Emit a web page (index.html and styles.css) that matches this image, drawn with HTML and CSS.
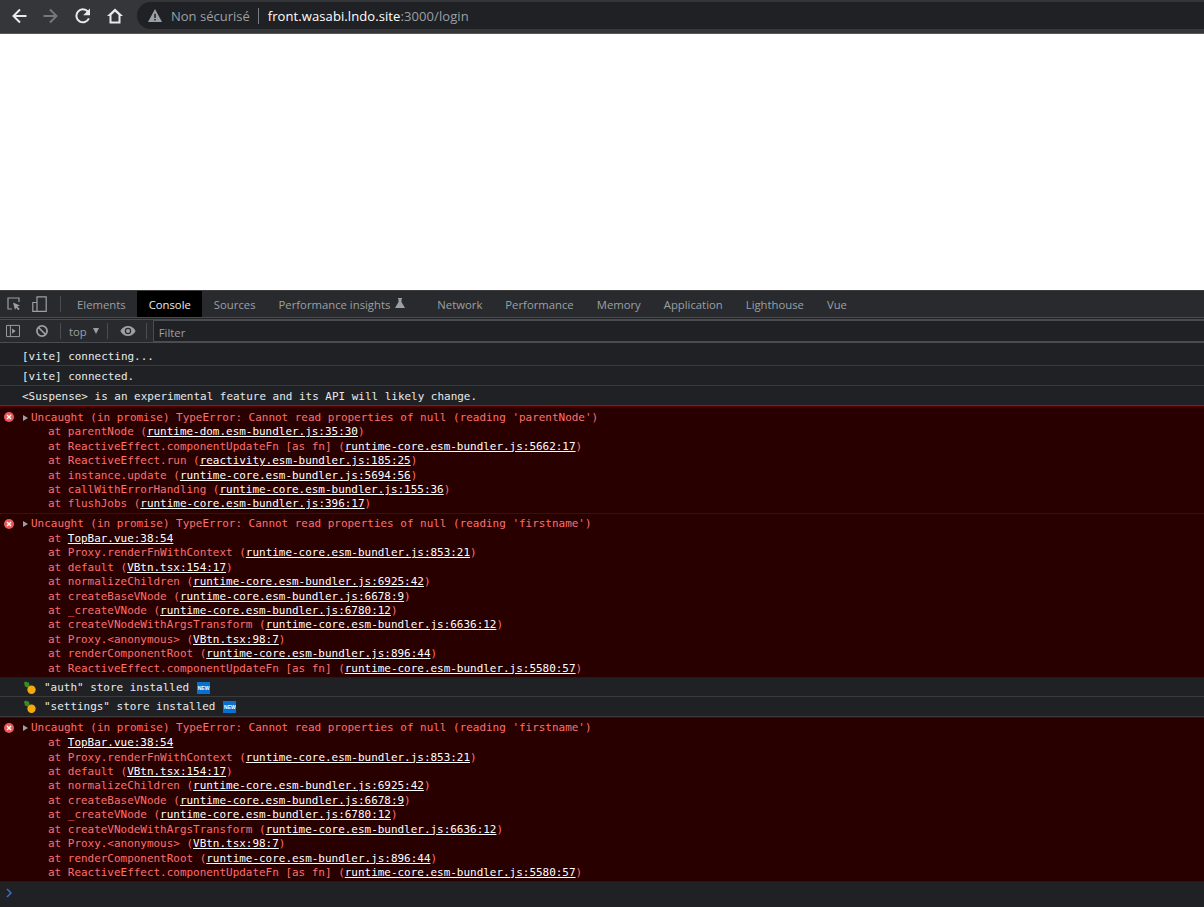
FILE: index.html
```html
<!DOCTYPE html>
<html lang="fr">
<head>
<meta charset="utf-8">
<title>front.wasabi.lndo.site:3000/login</title>
<link rel="stylesheet" href="styles.css">
</head>
<body>
<header class="browser-bar">
  <nav class="browser-nav">
    <svg class="nav-icon" viewBox="0 0 16 16"><path d="M15.500 8H2.500M9 1.500 2.500 8 9 14.500" fill="none" stroke="#e8eaed" stroke-width="2"/></svg>
    <svg class="nav-icon" viewBox="0 0 16 16"><path d="M.5 8h13M7 1.500 13.500 8 7 14.500" fill="none" stroke="#75787c" stroke-width="2"/></svg>
    <svg class="nav-icon" viewBox="0 0 16 16"><path d="M13.900 10.400A6.500 6.500 0 1 1 12.800 3.500" fill="none" stroke="#e8eaed" stroke-width="2"/><path d="M15 .5v6.800H8.200z" fill="#e8eaed"/></svg>
    <svg class="nav-icon" viewBox="0 0 16 16"><path d="M8 .5 0 8h2.500v7.500h11V8H16zM4.500 13.500V7L8 3.700 11.500 7v6.500z" fill="#e8eaed" fill-rule="evenodd"/></svg>
  </nav>
  <div class="omnibox">
    <svg class="warn-icon" viewBox="0 0 16 16"><path d="M8 1 .5 15h15zM7.200 6h1.600v4.600H7.200zM7.200 11.600h1.600v1.600H7.200z" fill="#9aa0a6" fill-rule="evenodd"/></svg>
    <span class="not-secure">Non sécurisé</span>
    <span class="omni-sep"></span>
    <span class="url"><b>front.wasabi.lndo.site</b>:3000/login</span>
  </div>
</header>

<main class="page"></main>

<section class="devtools">
  <div class="tabbar">
    <svg class="tool-icon inspect" viewBox="0 0 16 16"><path d="M6 13H2V2h11v4" fill="none" stroke="#9aa0a6" stroke-width="1.200"/><path d="m7 6.500 7 3-2.700 1 2.400 2.600-1.300 1.200-2.300-2.600L9 14z" fill="#9aa0a6"/></svg>
    <svg class="tool-icon device" viewBox="0 0 16 16"><path d="M5 15.400H.8V6.500H5M5 15.400h9.200V.8H5v14.600z" fill="none" stroke="#9aa0a6" stroke-width="1.200"/></svg>
    <span class="vsep tab-sep"></span>
    <span class="tab">Elements</span>
    <span class="tab active">Console</span>
    <span class="tab">Sources</span>
    <span class="tab">Performance insights<svg class="flask" viewBox="0 0 10 10"><path d="M3 0h4v1H6.500v3L10 10H0l3.500-6V1H3z" fill="#9aa0a6"/></svg></span>
    <span class="tab">Network</span>
    <span class="tab">Performance</span>
    <span class="tab">Memory</span>
    <span class="tab">Application</span>
    <span class="tab">Lighthouse</span>
    <span class="tab">Vue</span>
  </div>
  <div class="filterbar">
    <svg class="bar-icon sidebar" viewBox="0 0 16 16"><path d="M.6 1.600h14.800v12.800H.6zM5 1.600v12.800" fill="none" stroke="#9aa0a6" stroke-width="1.100"/><path d="m7 5 4 3-4 3z" fill="#9aa0a6"/></svg>
    <svg class="bar-icon clear" viewBox="0 0 16 16"><circle cx="8" cy="8" r="5.800" fill="none" stroke="#9aa0a6" stroke-width="2"/><path d="m4 4 8 8" stroke="#9aa0a6" stroke-width="2"/></svg>
    <span class="vsep"></span>
    <span class="context">top <i class="caret"></i></span>
    <span class="vsep"></span>
    <svg class="bar-icon eye" viewBox="0 0 16 12"><path d="M8 1C4.500 1 1.600 3.100.4 6c1.200 2.900 4.100 5 7.600 5s6.400-2.100 7.600-5C14.400 3.100 11.500 1 8 1zm0 8.200A3.200 3.200 0 1 1 8 2.800a3.200 3.200 0 0 1 0 6.400z" fill="#9aa0a6"/><circle cx="8" cy="6" r="2" fill="#9aa0a6"/></svg>
    <span class="vsep"></span>
    <div class="filter">Filter</div>
  </div>

  <div class="console">
    <div class="msg first">[vite] connecting...</div>
    <div class="msg">[vite] connected.</div>
    <div class="msg">&lt;Suspense&gt; is an experimental feature and its API will likely change.</div>

    <div class="err">
      <svg class="err-icon" viewBox="0 0 10 10"><circle cx="5" cy="5" r="5" fill="#ea5a5a"/><path d="m3 3 4 4M7 3 3 7" stroke="#fff" stroke-width="1.300"/></svg>
      <div class="err-head"><i class="expander"></i>Uncaught (in promise) TypeError: Cannot read properties of null (reading 'parentNode')</div>
      <div class="frame">at parentNode (<a>runtime-dom.esm-bundler.js:35:30</a>)</div>
      <div class="frame">at ReactiveEffect.componentUpdateFn [as fn] (<a>runtime-core.esm-bundler.js:5662:17</a>)</div>
      <div class="frame">at ReactiveEffect.run (<a>reactivity.esm-bundler.js:185:25</a>)</div>
      <div class="frame">at instance.update (<a>runtime-core.esm-bundler.js:5694:56</a>)</div>
      <div class="frame">at callWithErrorHandling (<a>runtime-core.esm-bundler.js:155:36</a>)</div>
      <div class="frame">at flushJobs (<a>runtime-core.esm-bundler.js:396:17</a>)</div>
    </div>

    <div class="err">
      <svg class="err-icon" viewBox="0 0 10 10"><circle cx="5" cy="5" r="5" fill="#ea5a5a"/><path d="m3 3 4 4M7 3 3 7" stroke="#fff" stroke-width="1.300"/></svg>
      <div class="err-head"><i class="expander"></i>Uncaught (in promise) TypeError: Cannot read properties of null (reading 'firstname')</div>
      <div class="frame">at <a>TopBar.vue:38:54</a></div>
      <div class="frame">at Proxy.renderFnWithContext (<a>runtime-core.esm-bundler.js:853:21</a>)</div>
      <div class="frame">at default (<a>VBtn.tsx:154:17</a>)</div>
      <div class="frame">at normalizeChildren (<a>runtime-core.esm-bundler.js:6925:42</a>)</div>
      <div class="frame">at createBaseVNode (<a>runtime-core.esm-bundler.js:6678:9</a>)</div>
      <div class="frame">at _createVNode (<a>runtime-core.esm-bundler.js:6780:12</a>)</div>
      <div class="frame">at createVNodeWithArgsTransform (<a>runtime-core.esm-bundler.js:6636:12</a>)</div>
      <div class="frame">at Proxy.&lt;anonymous&gt; (<a>VBtn.tsx:98:7</a>)</div>
      <div class="frame">at renderComponentRoot (<a>runtime-core.esm-bundler.js:896:44</a>)</div>
      <div class="frame">at ReactiveEffect.componentUpdateFn [as fn] (<a>runtime-core.esm-bundler.js:5580:57</a>)</div>
    </div>

    <div class="msg store">
      <svg class="pineapple" viewBox="0 0 14 14"><path d="M1 1.500 3 .5l1.500 1L6 1.500 6.500 5 4.500 6.500 2 5.500z" fill="#3c8c22"/><circle cx="8.500" cy="8.800" r="4.200" fill="#f3a90f"/></svg>
      <span>"auth" store installed</span><span class="new-badge">NEW</span>
    </div>
    <div class="msg store">
      <svg class="pineapple" viewBox="0 0 14 14"><path d="M1 1.500 3 .5l1.500 1L6 1.500 6.500 5 4.500 6.500 2 5.500z" fill="#3c8c22"/><circle cx="8.500" cy="8.800" r="4.200" fill="#f3a90f"/></svg>
      <span>"settings" store installed</span><span class="new-badge">NEW</span>
    </div>

    <div class="err">
      <svg class="err-icon" viewBox="0 0 10 10"><circle cx="5" cy="5" r="5" fill="#ea5a5a"/><path d="m3 3 4 4M7 3 3 7" stroke="#fff" stroke-width="1.300"/></svg>
      <div class="err-head"><i class="expander"></i>Uncaught (in promise) TypeError: Cannot read properties of null (reading 'firstname')</div>
      <div class="frame">at <a>TopBar.vue:38:54</a></div>
      <div class="frame">at Proxy.renderFnWithContext (<a>runtime-core.esm-bundler.js:853:21</a>)</div>
      <div class="frame">at default (<a>VBtn.tsx:154:17</a>)</div>
      <div class="frame">at normalizeChildren (<a>runtime-core.esm-bundler.js:6925:42</a>)</div>
      <div class="frame">at createBaseVNode (<a>runtime-core.esm-bundler.js:6678:9</a>)</div>
      <div class="frame">at _createVNode (<a>runtime-core.esm-bundler.js:6780:12</a>)</div>
      <div class="frame">at createVNodeWithArgsTransform (<a>runtime-core.esm-bundler.js:6636:12</a>)</div>
      <div class="frame">at Proxy.&lt;anonymous&gt; (<a>VBtn.tsx:98:7</a>)</div>
      <div class="frame">at renderComponentRoot (<a>runtime-core.esm-bundler.js:896:44</a>)</div>
      <div class="frame">at ReactiveEffect.componentUpdateFn [as fn] (<a>runtime-core.esm-bundler.js:5580:57</a>)</div>
    </div>

    <div class="prompt"><svg class="prompt-icon" viewBox="0 0 6 10"><path d="m1 1 4 4-4 4" fill="none" stroke="#3a6fc4" stroke-width="1.500"/></svg></div>
  </div>
</section>
</body>
</html>
```

FILE: styles.css
```css
* { box-sizing: border-box; }
html, body { margin: 0; height: 100%; }
body {
  display: flex;
  flex-direction: column;
  height: 907px;
  overflow: hidden;
  background: #fff;
  font-family: "Open Sans", "Noto Sans", sans-serif;
  font-size: 11.300px;
}

/* browser chrome */
.browser-bar {
  flex: 0 0 34px;
  display: flex;
  align-items: flex-start;
  background: #35363a;
  border-bottom: 1px solid #55585c;
}
.browser-nav {
  display: flex;
  gap: 16px;
  padding: 8px 0 0 11px;
  width: 137px;
}
.nav-icon { width: 16px; height: 16px; flex: none; }
.omnibox {
  flex: 1;
  height: 27px;
  margin-top: 2px;
  background: #202124;
  border-radius: 14px 0 0 14px;
  display: flex;
  align-items: center;
  padding-left: 10px;
  font-size: 13px;
  color: #9aa0a6;
}
.warn-icon { width: 16px; height: 15px; }
.not-secure { margin-left: 8px; }
.omni-sep { width: 1px; height: 16px; background: #7a7d81; margin: 0 9px 0 8px; }
.url { letter-spacing: .09px; }
.url b { font-weight: 400; color: #fff; }

.page { flex: 0 0 256px; background: #fff; }

/* devtools */
.devtools {
  flex: 1;
  min-height: 0;
  display: flex;
  flex-direction: column;
  background: #202124;
  color: #e8eaed;
}
.tabbar {
  flex: 0 0 28px;
  display: flex;
  align-items: stretch;
  background: #292a2d;
  border-top: 1px solid #3d3d3d;
  border-bottom: 1px solid #494c50;
  padding-left: 6px;
}
.tool-icon { width: 16px; height: 16px; align-self: center; flex: none; }
.device { margin-left: 10px; }
.tab-sep { margin: 0 4.500px 0 12px; }
.vsep { width: 1px; height: 16px; background: #494c50; align-self: center; flex: none; }
.tab {
  display: flex;
  align-items: center;
  padding: 0 11.500px;
  color: #9aa0a6;
  white-space: nowrap;
}
.tab.active { background: #000; color: #e8eaed; }
.flask { width: 10px; height: 10px; margin: 0 9px 2px 5px; }
.filterbar {
  flex: 0 0 24px;
  display: flex;
  align-items: center;
  margin-top: 1px;
  background: #292a2d;
  border-top: 1px solid #494c50;
  border-bottom: 1px solid #494c50;
  padding-left: 5px;
}
.bar-icon { flex: none; width: 16px; height: 14px; }
.clear { margin: 0 10px 0 13px; }
.context { color: #9aa0a6; padding: 0 8px 0 8px; display: flex; align-items: center; gap: 6px; }
.caret {
  border-left: 3.500px solid transparent;
  border-right: 3.500px solid transparent;
  border-top: 6px solid #9aa0a6;
}
.eye { margin: 0 10px 0 12px; height: 12px; }
.filter {
  flex: 1;
  height: 22px;
  margin-left: 6px;
  padding: 3px 0 0 5px;
  line-height: 18px;
  color: #9aa0a6;
  background: #202124;
  border: 1px solid #494c50;
  border-right: 0;
}

.console {
  flex: 1;
  display: flex;
  flex-direction: column;
  font-family: "DejaVu Sans Mono", "Liberation Mono", monospace;
  font-size: 10.960px;
  line-height: 14.400px;
}
.msg {
  flex: 0 0 20px;
  padding: 4px 0 0 22px;
  border-bottom: 1px solid #3a3a3a;
  color: #e8eaed;
}
.msg.first { margin-top: 3px; }
.store { display: flex; align-items: flex-start; padding-left: 23px; padding-top: 3px; }
.pineapple { width: 14px; height: 14px; margin: 0 7px 0 0; flex: none; }
.new-badge {
  width: 13px;
  height: 12px;
  margin: 1px 0 0 8px;
  background: #0b6fd0;
  color: #fff;
  font-size: 5px;
  line-height: 12px;
  text-align: center;
  font-family: "Liberation Sans", sans-serif;
  font-weight: 700;
  overflow: hidden;
  flex: none;
}
.err {
  position: relative;
  padding: 3.600px 0 .8px 31px;
  background: #290000;
  border-top: 1px solid #5c0000;
  color: #ff6f6f;
}
.err + .msg { border-top: 1px solid #5c0000; }
.err-icon { position: absolute; left: 4px; top: 5px; width: 10px; height: 10px; }
.err-head { position: relative; margin-bottom: .4px; }
.expander {
  position: absolute;
  left: -8px;
  top: 4px;
  border-left: 5px solid #9aa0a6;
  border-top: 3.500px solid transparent;
  border-bottom: 3.500px solid transparent;
}
.frame { padding-left: 17px; }
.frame a { color: #fff; text-decoration: underline; }
.prompt { flex: 1; border-top: 1px solid #5c0000; padding: 6px 0 0 6px; }
.prompt-icon { display: block; width: 6px; height: 10px; }
```
